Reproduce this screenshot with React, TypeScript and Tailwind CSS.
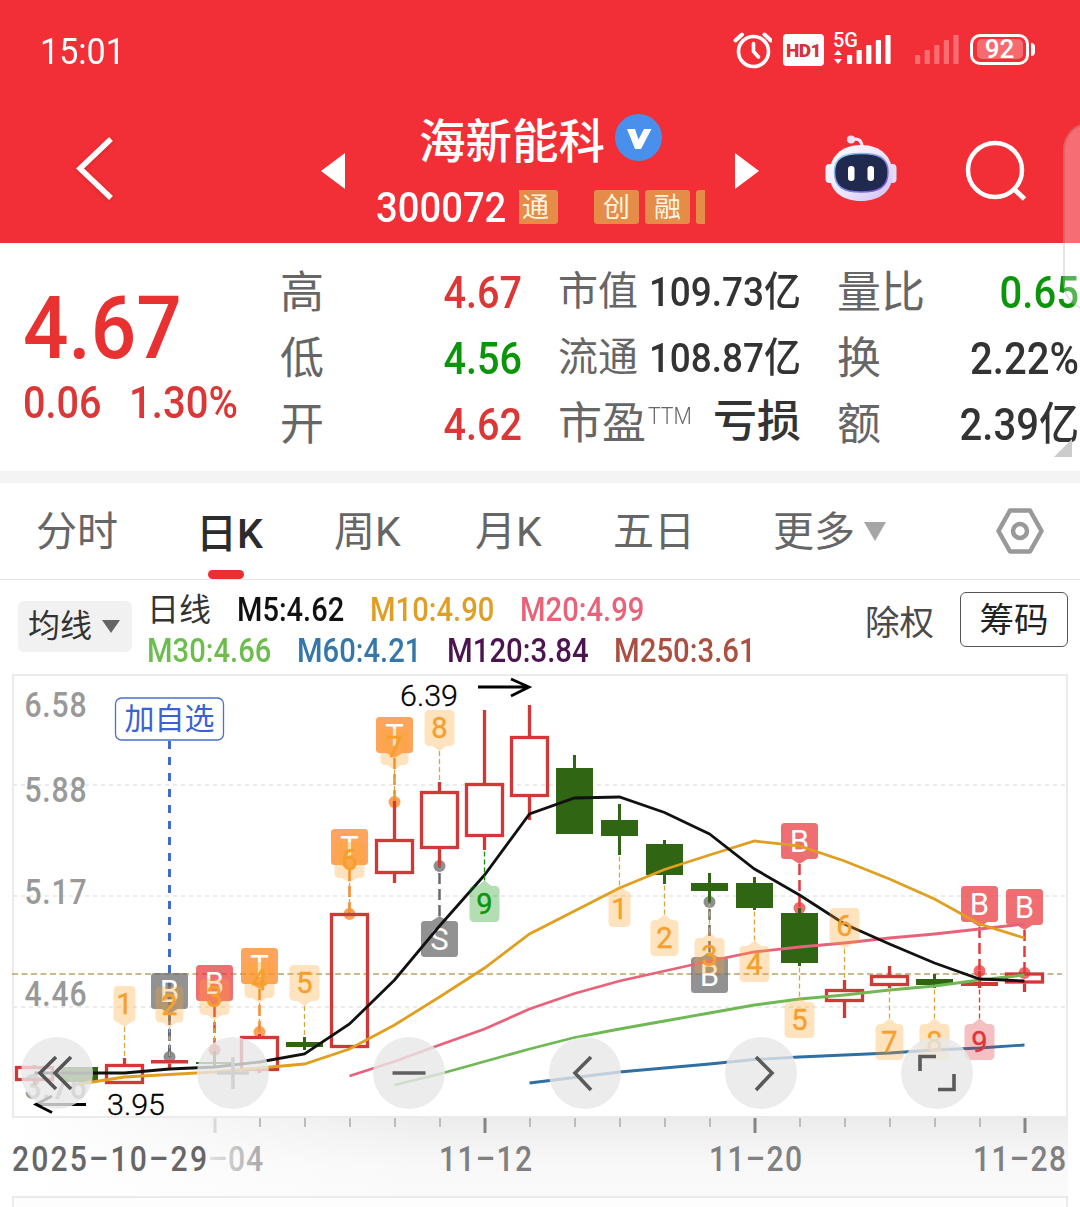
import type { ReactNode } from "react";

const STEP = 45;
const FIRST_X = 34.5;
const cx = (i: number) => FIRST_X + i * STEP;

type Candle = { up: boolean; open: number; close: number; high: number; low: number };

// body top, body bottom, wick top, wick bottom
const candles: Candle[] = [
    { up: true, open: 1066, close: 1081, high: 1065, low: 1085 },
    { up: false, open: 1067, close: 1082, high: 1067, low: 1082 },
    { up: true, open: 1064, close: 1084, high: 1058, low: 1084 },
    { up: true, open: 1060, close: 1063.5, high: 1060, low: 1068 },
    { up: false, open: 1062, close: 1064, high: 1051, low: 1067 },
    { up: true, open: 1036, close: 1071, high: 1034, low: 1073 },
    { up: false, open: 1042, close: 1047, high: 1037, low: 1050 },
    { up: true, open: 913, close: 1048, high: 913, low: 1048 },
    { up: true, open: 839, close: 874, high: 801, low: 883 },
    { up: true, open: 791, close: 849, high: 782, low: 866 },
    { up: true, open: 783, close: 837, high: 710, low: 850 },
    { up: true, open: 736, close: 797, high: 705, low: 820 },
    { up: false, open: 768, close: 834, high: 755, low: 834 },
    { up: false, open: 820, close: 836, high: 804, low: 855 },
    { up: false, open: 844, close: 875, high: 840, low: 884 },
    { up: false, open: 883, close: 891, high: 873, low: 902 },
    { up: false, open: 883, close: 908, high: 877, low: 910 },
    { up: false, open: 913, close: 963, high: 908, low: 966 },
    { up: true, open: 989, close: 1002, high: 980, low: 1018 },
    { up: true, open: 975, close: 986, high: 966, low: 988 },
    { up: false, open: 979, close: 985, high: 974, low: 988 },
    { up: true, open: 982, close: 986, high: 971, low: 988 },
    { up: true, open: 972.5, close: 983.5, high: 972, low: 992 },
];

// each series ends on the last candle
const averages = [
    { color: "#2f6fa3", y: [1083, 1077.5, 1072, 1068, 1064, 1059.5, 1057, 1055, 1053, 1050, 1048, 1045] },
    { color: "#6fb955", y: [1085, 1074, 1061.5, 1049, 1037.5, 1029, 1021, 1013, 1005, 999, 995, 990, 986, 980, 975] },
    { color: "#e8637a", y: [1076, 1061.5, 1045, 1029, 1009, 993.5, 981, 971, 961, 952, 947, 943, 938, 934, 929, 924] },
    { color: "#e09f1f", y: [1084, 1077, 1074.5, 1072, 1068, 1064, 1049, 1025, 997, 968, 934, 911, 888, 869.5, 855, 841, 846, 861, 879, 899, 924, 938] },
    { color: "#111111", y: [1073, 1073, 1073, 1069, 1067, 1062, 1054, 1024, 980, 926, 875, 814, 798, 797, 812.5, 834, 869, 895, 924, 944, 963, 979, 981] },
];

const RED = "#e9383c";
const ORANGE = "#fc8420";
const GRAY = "#6a6a6a";

// trade marks: dot sits on the candle, the tag is joined to it with a dashed line
const trades = [
    { i: 3, text: "B", color: GRAY, top: 973, dot: 1057 },
    { i: 4, text: "B", color: RED, top: 965, dot: 1050 },
    { i: 5, text: "T", color: ORANGE, top: 948, dot: 1032 },
    { i: 7, text: "T", color: ORANGE, top: 829, dot: 914 },
    { i: 8, text: "T", color: ORANGE, top: 717, dot: 802 },
    { i: 9, text: "S", color: GRAY, top: 921, dot: 866 },
    { i: 15, text: "B", color: GRAY, top: 957, dot: 902 },
    { i: 17, text: "B", color: RED, top: 823, dot: 908 },
    { i: 21, text: "B", color: RED, top: 886, dot: 971 },
    { i: 22, text: "B", color: RED, top: 889, dot: 973 },
];

const AMBER = "#f5a02c";

// nine-turn counters, "end" is where the thin dashed line stops
const counters = [
    { i: 2, n: 1, top: 986, end: 1058 },
    { i: 3, n: 2, top: 986.5, end: 1056 },
    { i: 4, n: 3, top: 979, end: 1050 },
    { i: 5, n: 4, top: 962, end: 1032 },
    { i: 6, n: 5, top: 965, end: 1037 },
    { i: 7, n: 6, top: 842, end: 913 },
    { i: 8, n: 7, top: 729, end: 801 },
    { i: 9, n: 8, top: 710, end: 783 },
    { i: 10, n: 9, top: 886, end: 850, color: "#0a960a" },
    { i: 13, n: 1, top: 891, end: 855 },
    { i: 14, n: 2, top: 920, end: 884 },
    { i: 15, n: 3, top: 938, end: 902 },
    { i: 16, n: 4, top: 946, end: 910 },
    { i: 17, n: 5, top: 1002, end: 966 },
    { i: 18, n: 6, top: 908, end: 980 },
    { i: 19, n: 7, top: 1024, end: 988 },
    { i: 20, n: 8, top: 1024, end: 988 },
    { i: 21, n: 9, top: 1024, end: 988, color: "#e0343a" },
];

const prices = [
    { text: "6.58", y: 717 },
    { text: "5.88", y: 802 },
    { text: "5.17", y: 903.5 },
    { text: "4.46", y: 1006 },
    { text: "3.76", y: 1099 },
];

const dates = [
    { text: "11–12", x: 439 },
    { text: "11–20", x: 709 },
    { text: "11–28", x: 973 },
];

// narrow figures stretched out to a fixed width
function Label({ x, y, w, children }: { x: number; y: number; w: number; children: string }) {
    const k = 0.86;
    return (
        <text transform={`translate(${x} ${y}) scale(${k} 1)`} textLength={w / k}>
            {children}
        </text>
    );
}

function CandleShape({ c, i }: { c: Candle; i: number }) {
    const x = cx(i);
    const h = c.close - c.open;
    if (!c.up) {
        return (
            <g fill="#2f6513">
                <rect x={x - 1.5} y={c.high} width={3} height={c.low - c.high} />
                <rect x={x - 18.5} y={c.open} width={37} height={h} />
            </g>
        );
    }
    return (
        <g stroke="#d13838" strokeWidth={3.3} fill="none">
            <path d={`M${x} ${c.high}V${c.open}M${x} ${c.close}V${c.low}`} />
            {h < 6 ? (
                <rect x={x - 18.5} y={c.open} width={37} height={h} fill="#d13838" stroke="none" />
            ) : (
                <rect x={x - 18} y={c.open + 1.5} width={36} height={h - 3} />
            )}
        </g>
    );
}

function TradeMark({ i, text, color, top, dot }: (typeof trades)[number]) {
    const x = cx(i);
    const below = top > dot;
    const tip = below ? top - 5 : top + 41;
    const base = below ? top : top + 36;
    return (
        <g>
            <path d={`M${x} ${tip}V${dot}`} stroke={color} strokeWidth={2.5} strokeDasharray="11 5" />
            <circle cx={x} cy={dot} r={6} fill={color} fillOpacity={0.75} />
            <g fill={color} fillOpacity={0.73}>
                <rect x={x - 18.5} y={top} width={37} height={36} rx={3.5} />
                <path d={`M${x - 8} ${base}L${x} ${tip}L${x + 8} ${base}Z`} />
            </g>
            <text x={x} y={top + 29} fontSize={31} fill="#fff" textAnchor="middle">
                {text}
            </text>
        </g>
    );
}

function Counter({ i, n, top, end, color = AMBER }: { i: number; n: number; top: number; end: number; color?: string }) {
    const x = cx(i);
    const below = top > end;
    const tip = below ? top - 5.5 : top + 41;
    const base = below ? top : top + 36;
    const w = n === 1 ? 22 : n === 2 || n === 7 ? 28 : 30;
    return (
        <g>
            <path d={`M${x} ${tip}V${end}`} stroke={color === AMBER ? "#dba63c" : color} strokeWidth={1.3} strokeDasharray="5 3" />
            <g fill={color === AMBER ? "#ffa62e" : color} fillOpacity={0.31}>
                <rect x={x - w / 2} y={top} width={w} height={36} rx={4.5} />
                <path d={`M${x - 7} ${base}L${x} ${tip}L${x + 7} ${base}Z`} />
            </g>
            <text x={x} y={top + 28} fontSize={29} fill={color} stroke={color} strokeWidth={0.4} textAnchor="middle">
                {n}
            </text>
        </g>
    );
}

function Chart() {
    return (
        <svg width={1080} height={535} viewBox="0 672 1080 535" className="block">
            <defs>
                <linearGradient id="axis" x1="0" y1="0" x2="0" y2="1">
                    <stop offset="0" stopColor="#ececec" />
                    <stop offset="0.6" stopColor="#f8f8f8" />
                    <stop offset="1" stopColor="#fafafa" />
                </linearGradient>
                <linearGradient id="fade" x1="0" y1="0" x2="1" y2="0">
                    <stop offset="0" stopColor="#fff" />
                    <stop offset="1" stopColor="#fff" stopOpacity="0" />
                </linearGradient>
                <linearGradient id="dateFade" x1="0" y1="0" x2="1" y2="0">
                    <stop offset="0" stopColor="#e4e4e4" />
                    <stop offset="1" stopColor="#a8a8a8" />
                </linearGradient>
            </defs>

            {/* Date axis */}
            <rect x={14} y={1118} width={1054} height={78} fill="url(#axis)" />
            <rect x={13} y={1118} width={420} height={78} fill="url(#fade)" />
            <rect x={14} y={1198} width={1054} height={10} fill="#fdfdfd" />
            {Array.from({ length: 19 }, (_, k) => {
                const major = k === 0 || k === 6 || k === 12 || k === 18;
                const stroke = k === 0 ? "#d9d9d9" : major ? "#858585" : "#bcbcbc";
                return <path key={k} d={`M${215 + k * STEP} 1118v${major ? 15 : 9}`} stroke={stroke} strokeWidth={major ? 3 : 2} />;
            })}
            <g fontSize={35} fontWeight={500}>
                <g fill="#666"><Label x={12} y={1171} w={195}>2025–10–29</Label></g>
                <g fill="url(#dateFade)"><Label x={208} y={1171} w={55}>–04</Label></g>
                <g fill="#808080">
                    {dates.map((d) => <Label key={d.text} x={d.x} y={1171} w={93}>{d.text}</Label>)}
                </g>
            </g>

            {/* Frame and grid */}
            <g fill="none" stroke="#ebebeb" strokeWidth={2}>
                <rect x={13} y={675} width={1054} height={442} />
                <path d="M13 1210V1197H1067V1210" />
                <path d="M13 785H1067M13 896H1067M13 1007H1067" strokeDasharray="4 4" />
            </g>
            <path d="M12 974H1062" stroke="#b9a468" strokeWidth={1.7} strokeDasharray="6 3.5" />
            <g fontSize={35} fontWeight={500} fill="#999">
                {prices.map((p) => <Label key={p.text} x={24.5} y={p.y} w={62}>{p.text}</Label>)}
            </g>

            {/* Added-to-watchlist mark */}
            <path d="M169.5 741V1058" stroke="#4169cf" strokeWidth={3} strokeDasharray="8 8" />
            <rect x={115.5} y={698} width={108} height={42} rx={6} fill="#fff" stroke="#4a70cc" strokeWidth={1.3} />
            <text x={169.5} y={729} fontSize={30} fill="#3a62d4" textAnchor="middle">加自选</text>

            {trades.map((t) => <TradeMark key={t.i} {...t} />)}
            {candles.map((c, i) => <CandleShape key={i} c={c} i={i} />)}
            {averages.map((a) => (
                <polyline
                    key={a.color}
                    points={a.y.map((y, k) => `${cx(candles.length - a.y.length + k)},${y}`).join(" ")}
                    fill="none"
                    stroke={a.color}
                    strokeWidth={2.8}
                />
            ))}
            {counters.map((c) => <Counter key={c.i} {...c} />)}

            {/* High and low */}
            <g fontSize={30} fontWeight={300} fill="#000" stroke="#000" strokeWidth={0.3}>
                <text x={400} y={705.5} textLength={58} lengthAdjust="spacingAndGlyphs">6.39</text>
                <text x={107} y={1114.5} textLength={58} lengthAdjust="spacingAndGlyphs">3.95</text>
            </g>
            <g fill="none" stroke="#000" strokeWidth={2.8}>
                <path d="M478 687H529M511 679L529 687L511 696" />
                <path d="M86 1104.5H36M52 1096L36 1104.5L52 1112.5" />
            </g>
        </svg>
    );
}

const tools = [
    { name: "rewind", d: "M35 20L19 36L35 52M50 20L34 36L50 52", color: "#555" },
    { name: "zoom in", d: "M20 36H52M36 20V52", color: "#d2d2d2" },
    { name: "zoom out", d: "M19.5 36H52.5", color: "#606060" },
    { name: "left", d: "M42 20L26 36L42 53", color: "#5a5a5a" },
    { name: "right", d: "M31 20L47 36L31 53", color: "#5a5a5a" },
    { name: "expand", d: "M19 34V19.5H35M53 37V52.5H37", color: "#5a5a5a" },
];

function ToolBar() {
    return (
        <div className="absolute left-[21px] top-[365px] flex gap-[104px]">
            {tools.map((t) => (
                <button key={t.name} aria-label={t.name} className="size-[72px] rounded-full bg-[#e7e7e7]/80">
                    <svg viewBox="0 0 72 72" className="size-[72px]">
                        <path d={t.d} fill="none" stroke={t.color} strokeWidth={3.6} />
                    </svg>
                </button>
            ))}
        </div>
    );
}

function Signal({ className }: { className?: string }) {
    return (
        <svg width={44} height={30} viewBox="0 0 44 30" className={className} fill="currentColor">
            {[0, 1, 2, 3, 4].map((k) => (
                <rect key={k} x={k * 9.6} y={21 - k * 5} width={5.2} height={9 + k * 5} rx={1} />
            ))}
        </svg>
    );
}

function StatusBar() {
    return (
        <div className="flex h-[100px] items-center text-white">
            <span className="ml-[40px] w-[690px] origin-left scale-x-[.92] pt-[3px] text-[37px] leading-none">15:01</span>
            <svg width={42} height={38} viewBox="0 0 42 38" fill="none" stroke="#fff" strokeWidth={3.6} strokeLinecap="round">
                <circle cx={23.5} cy={20.5} r={15} />
                <path d="M23.5 12.5V20.5L28.5 26" />
                <path d="M5.5 9.5L12 3.5M41 9.5L34.5 3.5" strokeWidth={4} />
            </svg>
            <span className="ml-[11px] flex h-[32px] w-[41px] items-center justify-center rounded-[4px] bg-white text-[19px] font-black leading-none tracking-[-0.5px] text-[#d5333a]">
                HD1
            </span>
            <div className="relative ml-[9px] h-[34px] w-[60px]">
                <span className="absolute -top-[3px] left-0 text-[20px] font-medium leading-none">5G</span>
                <svg width={8} height={14} viewBox="0 0 8 14" fill="#fff" className="absolute bottom-[3px] left-[1px]">
                    <path d="M4 0L8 5H0ZM4 14L0 9H8Z" />
                </svg>
                <Signal className="absolute bottom-[3px] left-[14px]" />
            </div>
            <Signal className="-mt-[2px] ml-[22px] text-[#f96d72]" />
            <div className="-mt-[2px] ml-[11px] flex h-[31px] w-[59px] items-center justify-center rounded-[10px] border-[3px] border-white">
                <span className="flex h-[20px] w-[46px] items-center justify-center rounded-[5px] bg-[#f56b70] text-[26px] font-medium leading-none">92</span>
            </div>
            <span className="-mt-[2px] ml-[2px] h-[13px] w-[4px] rounded-r bg-white" />
        </div>
    );
}

function Badge({ children }: { children: ReactNode }) {
    return (
        <span className="flex h-[34px] w-[45px] items-center justify-center rounded-[3px] bg-[#e58d48] pt-[2px] text-[27px] leading-none text-[#fff5e0]">
            {children}
        </span>
    );
}

function Robot() {
    return (
        <svg width={72} height={67} viewBox="0 0 72 67">
            <defs>
                <linearGradient id="shell" x1="0" y1="0" x2="1" y2="1">
                    <stop offset="0" stopColor="#fff" />
                    <stop offset="0.6" stopColor="#e9e2fa" />
                    <stop offset="1" stopColor="#cbbcf0" />
                </linearGradient>
                <linearGradient id="rim" x1="0" y1="0" x2="1" y2="1">
                    <stop offset="0" stopColor="#8fdcf5" />
                    <stop offset="1" stopColor="#7b3fe0" />
                </linearGradient>
            </defs>
            <circle cx={26} cy={4.5} r={4} fill="#f4dff0" />
            <path d="M28 4.5C34 3 37 6 37 12" fill="none" stroke="#f1e6f7" strokeWidth={3.2} />
            <rect x={0.5} y={29} width={10} height={19} rx={4} fill="#f3f0fd" />
            <rect x={61} y={29} width={10.5} height={19} rx={4} fill="#e3dbf8" />
            <path d="M36 10C56 10 67.5 22 67.5 39C67.5 57 54 66 36 66S4.5 57 4.5 39C4.5 22 16 10 36 10Z" fill="url(#shell)" />
            <path d="M36 18.5C54 18.5 63 23 63 37C63 52 54 57 36 57S9.5 52 9.5 37C9.5 23 18 18.5 36 18.5Z" fill="#202a4e" stroke="url(#rim)" strokeWidth={1.5} />
            <rect x={23} y={31} width={6.5} height={15} rx={3.2} fill="#fff" />
            <rect x={42.5} y={31} width={6.5} height={15} rx={3.2} fill="#fff" />
        </svg>
    );
}

function TitleBar() {
    return (
        <div className="flex h-[143px] text-white">
            <svg width={50} height={70} viewBox="0 0 50 70" className="ml-[70px] mt-[34px] drop-shadow-sm" fill="none" stroke="#fff" strokeWidth={5.5}>
                <path d="M41 5L10 34.5L41 64" />
            </svg>
            <svg width={24} height={36} viewBox="0 0 24 36" className="ml-[201px] mt-[53px]" fill="#fff">
                <path d="M0 18L24 0V36Z" />
            </svg>
            <div className="ml-[31px] mt-[13px] flex w-[329px] flex-col">
                <div className="flex h-[48px] items-center pl-[43px]">
                    <span className="pt-[10px] text-[46.5px] font-medium leading-none">海新能科</span>
                    <svg width={47} height={47} viewBox="0 0 47 47" className="ml-[10px]">
                        <circle cx={23.5} cy={23.5} r={23.5} fill="#4890ec" />
                        <path d="M12 15H20L23.5 25.5L29 15H36.5L26 35H20Z" fill="#fff" />
                    </svg>
                </div>
                <div className="mt-[29px] flex h-[34px] items-center">
                    <div className="w-[143px]">
                        <span className="inline-block origin-left scale-x-[.91] pt-[1px] text-[42px] font-medium leading-none">300072</span>
                    </div>
                    <span className="flex h-[34px] w-[39px] shrink-0 items-center justify-end rounded-r-[3px] bg-[#e58d48] pr-[9px] pt-[2px] text-[27px] leading-none text-[#fff5e0]">通</span>
                    <div className="ml-[36px] flex shrink-0 gap-[6px]">
                        <Badge>创</Badge>
                        <Badge>融</Badge>
                        <span className="w-[9px] rounded-l-[3px] bg-[#e58d48]" />
                    </div>
                </div>
            </div>
            <svg width={24} height={36} viewBox="0 0 24 36" className="ml-[30px] mt-[53px]" fill="#fff">
                <path d="M24 18L0 0V36Z" />
            </svg>
            <div className="ml-[66px] mt-[35px]">
                <Robot />
            </div>
            <svg width={64} height={64} viewBox="0 0 64 64" className="ml-[67px] mt-[39px]" fill="none" stroke="#fff" strokeWidth={4.5}>
                <circle cx={31} cy={31} r={27} />
                <path d="M49 49L60.5 60" strokeWidth={5} />
            </svg>
        </div>
    );
}

const quoteRows = [
    { a: "高", av: "4.67", aColor: "text-[#dc3737]", b: "市值", bv: "109.73亿", c: "量比", cv: "0.65", cColor: "text-[#0a950a]" },
    { a: "低", av: "4.56", aColor: "text-[#0a950a]", b: "流通", bv: "108.87亿", c: "换", cv: "2.22%", cColor: "text-[#333]" },
    { a: "开", av: "4.62", aColor: "text-[#dc3737]", b: "市盈", bv: "亏损", c: "额", cv: "2.39亿", cColor: "text-[#333]" },
];

function Quote() {
    return (
        <div className="flex h-[228px] bg-white">
            <div className="w-[280px] pl-[23px] pt-[41px] font-medium text-[#e83232]">
                <div className="origin-left scale-x-[.91] text-[88px] leading-[88px]">4.67</div>
                <div className="mt-[8px] flex text-[45px] leading-none text-[#dc3737]">
                    <span className="w-[106px] origin-left scale-x-[.88]">0.06</span>
                    <span className="origin-left scale-x-[.89]">1.30%</span>
                </div>
            </div>
            <div className="flex-1 pt-[16px]">
                {quoteRows.map((r) => (
                    <div key={r.a} className="flex h-[66px] items-center whitespace-nowrap text-[44px] leading-none text-[#666]">
                        <span className="w-[120px] pt-[2px]">{r.a}</span>
                        <span className={`w-[122px] origin-right scale-x-[.88] text-right text-[45px] font-medium ${r.aColor}`}>{r.av}</span>
                        <span className="ml-[36px] flex w-[243px] items-center justify-between">
                            {r.b === "市盈" ? (
                                <>
                                    <span className="flex">{r.b}<span className="ml-[2px] w-[43px] origin-left scale-x-[.92] pt-[3px] text-[23px] font-light">TTM</span></span>
                                    <span className="pb-[4px] font-medium text-[#333]">{r.bv}</span>
                                </>
                            ) : (
                                <>
                                    <span className="text-[40px]">{r.b}</span>
                                    <span className="-ml-[8px] origin-right scale-x-[.9] text-[41px] font-medium text-[#333]">{r.bv}</span>
                                </>
                            )}
                        </span>
                        <span className="ml-[36px] w-[100px] pt-[2px]">{r.c}</span>
                        <span className={`w-[142px] origin-right scale-x-[.89] text-right text-[45px] font-medium ${r.cColor}`}>{r.cv}</span>
                    </div>
                ))}
            </div>
        </div>
    );
}

function Tabs() {
    return (
        <div className="flex h-[97px] border-b border-[#e4e4e4] pt-[26px] text-[41px] leading-[46px] text-[#666]">
            <span className="ml-[36px] w-[160px]">分时</span>
            <div className="flex w-[138px] flex-col pt-[2px] font-medium text-[#2c2c2c]">
                <span className="h-[59px]">日K</span>
                <span className="ml-[12px] h-[9px] w-[36px] rounded-full bg-[#e83030]" />
            </div>
            <span className="w-[141px]">周K</span>
            <span className="w-[138px]">月K</span>
            <span className="w-[160px]">五日</span>
            <span className="w-[91px]">更多</span>
            <svg width={22} height={19} viewBox="0 0 22 19" className="mt-[13px]" fill="#a6a6a6">
                <path d="M0 0H22L11 19Z" />
            </svg>
            <svg width={50} height={48} viewBox="0 0 50 48" className="ml-[109px] -mt-[2px]" fill="none" stroke="#999" strokeWidth={4.5} strokeLinejoin="round">
                <path d="M15 3.5H35L46.5 24L35 44.5H15L3.5 24Z" />
                <circle cx={25} cy={24} r={7} />
            </svg>
        </div>
    );
}

function Legend() {
    return (
        <div className="flex h-[92px] text-[33px] font-medium leading-[41px]">
            <button className="ml-[18px] mt-[21px] flex h-[51px] w-[114px] items-center gap-[10px] rounded-[6px] bg-[#f1f1f1] pl-[10px] text-[32px] font-normal text-[#333]">
                均线
                <svg width={18} height={13} viewBox="0 0 18 13" fill="#666">
                    <path d="M0 0H18L9 13Z" />
                </svg>
            </button>
            <div className="ml-[15px] w-[718px] whitespace-nowrap pt-[9px]">
                <div className="flex">
                    <span className="w-[90px] pt-[1px] text-[32px] font-normal leading-[40px] text-[#333]">日线</span>
                    <span className="w-[133px] origin-left scale-x-[.88] text-[#111]">M5:4.62</span>
                    <span className="w-[150px] origin-left scale-x-[.885] text-[#e09f24]">M10:4.90</span>
                    <span className="origin-left scale-x-[.885] text-[#e8637a]">M20:4.99</span>
                </div>
                <div className="flex">
                    <span className="w-[150px] origin-left scale-x-[.885] text-[#6dbd4e]">M30:4.66</span>
                    <span className="w-[150px] origin-left scale-x-[.885] text-[#3477a8]">M60:4.21</span>
                    <span className="w-[167px] origin-left scale-x-[.89] text-[#4b1450]">M120:3.84</span>
                    <span className="origin-left scale-x-[.89] text-[#ab5040]">M250:3.61</span>
                </div>
            </div>
            <span className="mt-[23px] w-[95px] text-[34.5px] font-normal text-[#4a4a4a]">除权</span>
            <button className="mt-[12px] h-[55px] w-[108px] rounded-[6px] border border-[#555] text-[34.5px] font-normal leading-[52px] text-[#222]">筹码</button>
        </div>
    );
}

export default function App() {
    return (
        <div className="relative h-[1207px] w-[1080px] overflow-hidden bg-white font-[Roboto,'Noto_Sans_CJK_SC',sans-serif]">
            <header className="h-[243px] bg-[#f22f37]">
                <StatusBar />
                <TitleBar />
            </header>
            <Quote />
            <div className="h-[12px] bg-[#f4f4f4]" />
            <Tabs />
            <Legend />
            <div className="relative">
                <Chart />
                <ToolBar />
            </div>

            {/* Edge panel handle and the expand corner */}
            <div className="absolute left-[1063px] top-[122px] h-[189px] w-[60px] rounded-[28px] border-2 border-black/10 bg-white/30" />
            <svg width={18} height={18} viewBox="0 0 18 18" className="absolute left-[1054px] top-[439px]" fill="#ccc">
                <path d="M18 0V18H0Z" />
            </svg>
        </div>
    );
}
